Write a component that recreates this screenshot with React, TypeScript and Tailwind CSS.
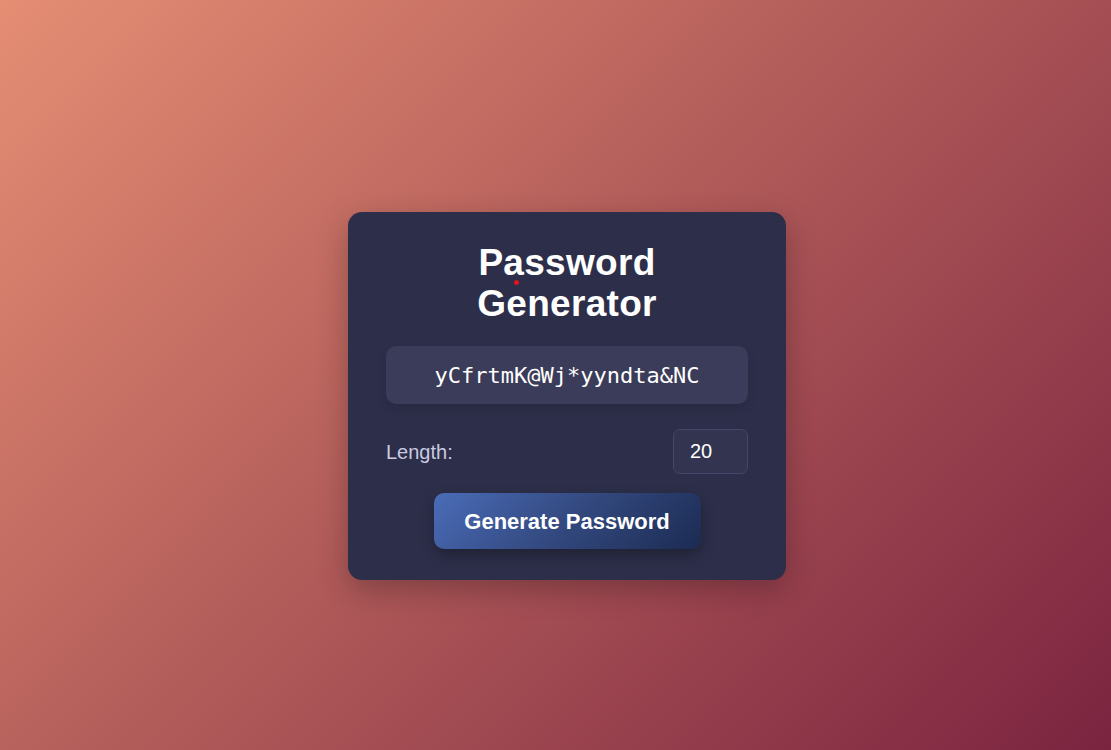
import React, { useState } from 'react';

const CHARS = 'ABCDEFGHIJKLMNOPQRSTUVWXYZabcdefghijklmnopqrstuvwxyz0123456789!@#$%^&*';

const makePassword = (len: number) => {
  let out = '';
  for (let i = 0; i < len; i++) out += CHARS[Math.floor(Math.random() * CHARS.length)];
  return out;
};

export default function App() {
  const [length, setLength] = useState(20);
  const [password, setPassword] = useState('yCfrtmK@Wj*yyndta&NC');

  return (
    <div className="min-h-screen w-full flex items-center justify-center pl-[23px] pt-[42px] bg-[linear-gradient(135deg,#e58e74_0%,#b45e5b_45%,#7b2440_100%)] font-['Liberation_Sans',Arial,sans-serif]">
      <div className="relative w-[438px] rounded-[14px] bg-[#2d2f4a] px-[38px] pt-[30px] pb-[31px] shadow-[0_10px_30px_rgba(0,0,0,0.25)]">
        <h1 className="mx-auto max-w-[300px] text-center text-[37px] leading-[41px] font-bold tracking-[0.3px] text-white">Password Generator</h1>
        <span className="absolute left-[166px] top-[68px] h-[5px] w-[5px] rounded-full bg-[#e0141e]" />

        <div className="mt-[22px] h-[58px] rounded-[10px] bg-[#3b3c59] flex items-center justify-center shadow-[0_4px_10px_rgba(0,0,0,0.12)]">
          <span className="font-['DejaVu_Sans_Mono',monospace] text-[22px] text-white">{password}</span>
        </div>

        <div className="mt-[25px] flex items-center justify-between">
          <label className="text-[20px] text-[#c9cbe0]">Length:</label>
          <input
            type="number"
            value={length}
            min={4}
            max={64}
            onChange={(e) => setLength(Number(e.target.value))}
            className="w-[75px] h-[45px] rounded-[7px] border border-[#44466a] bg-[#323450] pl-[16px] text-[20px] text-white outline-none [appearance:textfield]"
          />
        </div>

        <div className="mt-[19px] flex justify-center">
          <button
            onClick={() => setPassword(makePassword(length))}
            className="w-[267px] h-[56px] rounded-[10px] bg-[linear-gradient(135deg,#4a6cb8_0%,#33497f_50%,#1b2b52_100%)] text-[22px] font-bold text-white shadow-[0_6px_14px_rgba(0,0,0,0.3)]"
          >
            Generate Password
          </button>
        </div>
      </div>
    </div>
  );
}
